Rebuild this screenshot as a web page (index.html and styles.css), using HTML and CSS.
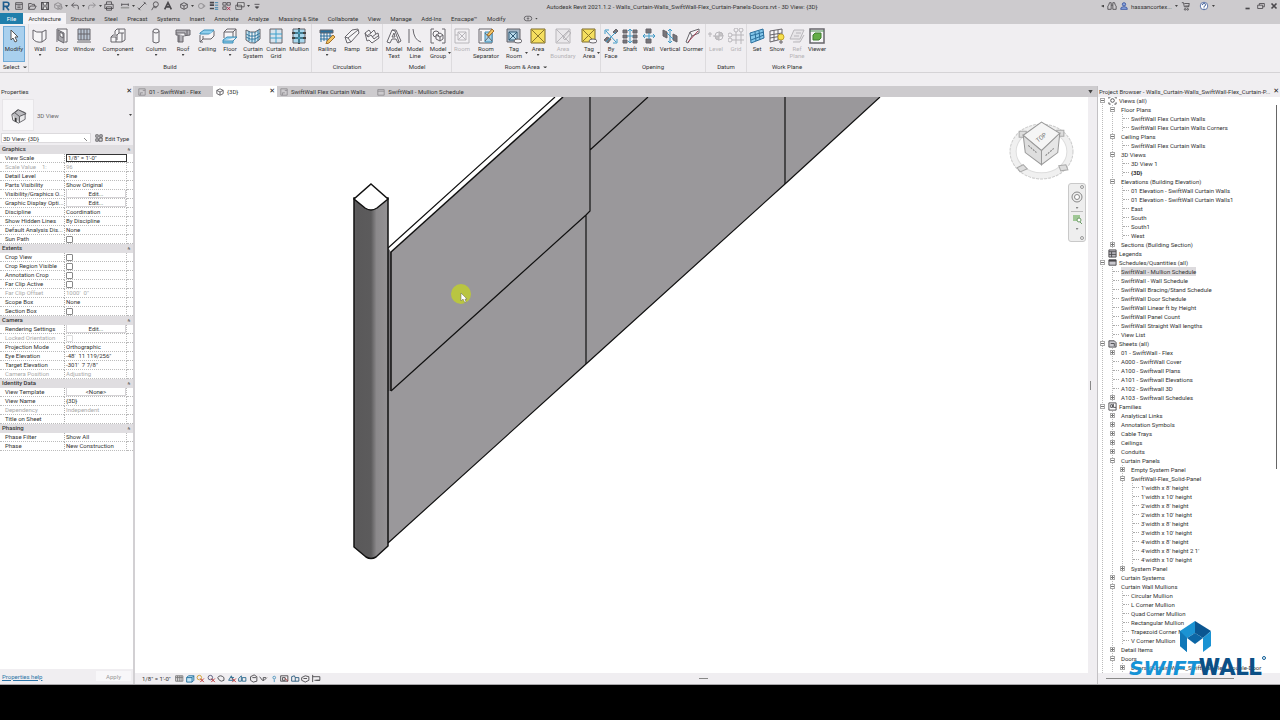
FILE: index.html
```
<!DOCTYPE html>
<html lang="en">

<head>
    <meta charset="UTF-8">
    <meta name="viewport" content="width=device-width, initial-scale=1.0">
    <title>Autodesk Revit 2021.1.2</title>
    <link rel="stylesheet" href="styles.css">
</head>

<body>
    <header class="titlebar">
        <div class="qat">
            <svg viewBox="0 0 12 12"><path d="M3 11V1.5h4a2.4 2.4 0 0 1 0 5H3M6 6.500l3.500 4.500" fill="none" stroke="#1f5c8d" stroke-width="2"/></svg>
            <svg viewBox="0 0 12 12" class="ic"><path d="M2 2h8v8H2zM2 4h8M4 6h4M4 8h4"/></svg>
            <svg viewBox="0 0 12 12" class="ic"><path d="M2 10V3h3l1 1h3v2M2 10l2-4h7l-2 4z"/></svg>
            <svg viewBox="0 0 12 12" class="ic"><path d="M2 2h8v8H2z" stroke-width="1.500"/><path d="M4 2v3h4V2M4 10V7h4v3" fill="#eee"/></svg>
            <svg viewBox="0 0 12 12" class="ic dim"><path d="M2 4l4-2 4 2v4l-4 2-4-2zM2 4l4 2 4-2M6 6v4"/><circle cx="9" cy="8" r="2"/></svg>
            <i class="caret"></i>
            <svg viewBox="0 0 12 12" class="ic"><path d="M5 2L2 5l3 3M2 5h6q2 0 2 2v3"/></svg>
            <i class="caret"></i>
            <svg viewBox="0 0 12 12" class="ic dim"><path d="M7 2l3 3-3 3M10 5H4Q2 5 2 7v3"/></svg>
            <i class="caret"></i>
            <svg viewBox="0 0 12 12" class="ic"><path d="M3 4V1h6v3M1 4h10v5H1zM3 7h6v4H3z"/></svg>
            <i class="sep"></i>
            <svg viewBox="0 0 12 12" class="ic"><path d="M2 3v3M10 3v3M2 4h8" /><path d="M1 8h10" stroke-width="2" stroke="#999"/></svg>
            <i class="caret"></i>
            <svg viewBox="0 0 12 12" class="ic"><path d="M2 10l8-8M1 8l3 3M8 1l3 3"/></svg>
            <svg viewBox="0 0 12 12" class="ic"><circle cx="7" cy="4" r="3"/><path d="M5 6l-3 5M5 8h3"/></svg>
            <svg viewBox="0 0 12 12" class="ic"><path d="M2 10L6 2l4 8M4 7h4" stroke-width="2"/></svg>
            <i class="sep"></i>
            <svg viewBox="0 0 12 12" class="ic"><path d="M2 4l4-2 4 2v4l-4 2-4-2zM2 4l4 2 4-2M6 6v4"/></svg>
            <i class="caret"></i>
            <svg viewBox="0 0 12 12" class="ic dim"><circle cx="6" cy="6" r="3"/><path d="M9 4l2 2-2 2"/></svg>
            <svg viewBox="0 0 12 12" class="ic"><path d="M1 2h5M1 5h5M1 9h5" stroke-width="2"/><path d="M7 2h4M7 5h4M7 8h4M7 10h4" stroke="#2a7ca8"/></svg>
            <svg viewBox="0 0 12 12" class="ic"><path d="M1 2h4v3H1zM6 2h4v3H6zM1 7h4v3H1z"/><path d="M6 7l4 4M10 7l-4 4" stroke="#b02043"/></svg>
            <svg viewBox="0 0 12 12" class="ic"><path d="M3 2h8v5H3zM1 5h7v5H1z" fill="#ddd"/></svg>
            <i class="caret"></i>
            <svg viewBox="0 0 12 12" class="ic"><path d="M3 4h6M4 7h4l-2 2z" fill="#444"/></svg>
        </div>
        <div class="title">Autodesk Revit 2021.1.2 - Walls_Curtain-Walls_SwiftWall-Flex_Curtain-Panels-Doors.rvt - 3D View: {3D}</div>
        <div class="account">
            <i class="caret left"></i>
            <svg viewBox="0 0 12 12" class="ic"><path d="M2 5l1-3h2v8H1V6zM10 5L9 2H7v8h4V6zM5 5h2"/></svg>
            <svg viewBox="0 0 12 12" class="ic"><circle cx="6" cy="4" r="2" fill="#8aa4dd" stroke="#334f9c"/><path d="M2 10q0-3 3-3h2q3 0 3 3z" fill="#8aa4dd" stroke="#334f9c"/></svg>
            <span>hassancortex...</span>
            <i class="caret"></i>
            <svg viewBox="0 0 12 12" class="ic"><path d="M1 2h2l1 5h5l1-4H4M5 6h5"/><circle cx="5" cy="10" r="1"/><circle cx="8" cy="10" r="1"/></svg>
            <svg viewBox="0 0 12 12" class="ic help"><circle cx="6" cy="6" r="4.500" fill="#fff" stroke="#44619e"/><path d="M4 5q0-2 2-2t2 1.500Q8 6 6 6.500V8M6 9v1" stroke="#284888"/></svg>
            <i class="caret"></i>
        </div>
        <div class="window-buttons">
            <button aria-label="Minimize"><svg viewBox="0 0 12 12" class="ic"><path d="M3 9h5" stroke-width="2"/></svg></button>
            <button aria-label="Restore"><svg viewBox="0 0 12 12" class="ic"><path d="M4 5V3h6v4H8M2 5h6v4H2z"/></svg></button>
            <button aria-label="Close"><svg viewBox="0 0 12 12" class="ic"><path d="M3 3l6 6M9 3l-6 6" stroke-width="2"/></svg></button>
        </div>
    </header>

    <nav class="ribbon-tabs">
        <button class="file">File</button>
        <button class="active">Architecture</button>
        <button>Structure</button>
        <button>Steel</button>
        <button>Precast</button>
        <button>Systems</button>
        <button>Insert</button>
        <button>Annotate</button>
        <button>Analyze</button>
        <button>Massing &amp; Site</button>
        <button>Collaborate</button>
        <button>View</button>
        <button>Manage</button>
        <button>Add-Ins</button>
        <button>Enscape™</button>
        <button>Modify</button>
        <button class="more" aria-label="Display options"><svg viewBox="0 0 12 12" class="ic"><rect x="1" y="3" width="10" height="6" rx="3"/><circle cx="6" cy="6" r="1"/></svg><i class="caret"></i></button>
    </nav>

    <section class="ribbon">
        <div class="group select-group">
            <div class="tools">
                <button class="tool w22 active"><svg viewBox="0 0 16 16"><path d="M5 2v10l2-2 2 4 2-1-2-4h3z" fill="#fff" stroke="#555"/></svg>Modify</button>
            </div>
            <div class="group-name">Select <i class="caret"></i></div>
        </div>
        <div class="group">
            <div class="tools">
                <button class="tool w22"><svg viewBox="0 0 16 16" class="ri"><path d="M1 2q3 3 9 2l4-2v9l-4 3q-6 1-9-3zM10 4v10"/></svg>Wall<i class="caret"></i></button>
                <button class="tool w22"><svg viewBox="0 0 16 16" class="ri"><path d="M3 14V1h10v13h-2"/><path d="M4 2l6 3v10l-6-3z" fill="#aaa9ae"/><path d="M6 4l3 2v4L6 8z" fill="#fff"/></svg>Door</button>
                <button class="tool w22"><svg viewBox="0 0 16 16" class="ri"><path d="M2 1h12v11H2z" fill="#b9c4d2"/><path d="M8 1v11M2 6h12M1 14h14M5 1v11M11 1v11"/></svg>Window</button>
                <button class="tool w46"><svg viewBox="0 0 16 16" class="ri"><path d="M5 6V3l2-2h8v11l-3 2H1V9l2-2h4v5M7 7l2-2h5M9 5V1M12 14V5M1 9h5v5"/></svg>Component<i class="caret"></i></button>
                <button class="tool w30"><svg viewBox="0 0 16 16" class="ri"><path d="M5 3v11l3 1 3-1V3z"/><ellipse cx="8" cy="3" rx="3" ry="2"/></svg>Column<i class="caret"></i></button>
                <button class="tool w24"><svg viewBox="0 0 16 16" class="ri"><path d="M1 2h14v5l-7 1v6H3V7H1z" fill="#b3b1b7"/><path d="M1 5h9v3M4 14V7M12 2v5"/></svg>Roof<i class="caret"></i></button>
                <button class="tool w24"><svg viewBox="0 0 16 16" class="ri"><path d="M1 5l4-3h10l-3 4H1z" fill="#8fd0ee" stroke="#3c8eb8"/><path d="M1 7v7l3-3V8M4 11h8l3-3V3M1 14h3"/></svg>Ceiling</button>
                <button class="tool w22"><svg viewBox="0 0 16 16" class="ri"><path d="M2 10V4l3-3h9v9M2 4h9l3-3M11 4v6"/><path d="M1 12l4-3h10l-4 4v2H1zM1 13h10l4-4" fill="#8fd0ee" stroke="#3c8eb8"/></svg>Floor<i class="caret"></i></button>
                <button class="tool w24"><svg viewBox="0 0 16 16" class="ri"><path d="M1 2q4 3 9 2l5-3v10l-5 4q-5 1-9-3z" fill="#bfe2f2"/><path d="M4 3v10M7 4v10M10 4v11M13 2v11M1 6q4 3 9 2l5-3M1 9q4 3 9 2l5-3" stroke="#34789f"/></svg>Curtain<br>System</button>
                <button class="tool w22"><svg viewBox="0 0 16 16" class="ri"><path d="M2 1h12v14H2z" fill="#d7e3ec"/><path d="M8 1v14M2 6h12M2 10h12" stroke="#3da0cc"/></svg>Curtain<br>Grid</button>
                <button class="tool w24"><svg viewBox="0 0 16 16" class="ri"><path d="M2 1h12v14H2z" fill="#a9d6ec"/><path d="M8 0v16M1 5h14M1 10h14" stroke="#444" stroke-width="2"/><path d="M8 1v14M4 5h8M4 10h8" stroke="#42b4dc"/></svg>Mullion</button>
            </div>
            <div class="group-name">Build</div>
        </div>
        <div class="group">
            <div class="tools">
                <button class="tool w30"><svg viewBox="0 0 16 16" class="ri"><path d="M1 2h13v3H1z" fill="#2b6f9c"/><path d="M2 5v9M5 5v8M8 5v8M11 5v6M1 8h12M1 11h10" stroke="#2b6f9c"/><path d="M8 13l6-6 2 2-6 6-3 1z" fill="#f2c466" stroke="#a4712b"/></svg>Railing<i class="caret"></i></button>
                <button class="tool w20"><svg viewBox="0 0 16 16" class="ri"><path d="M1 9l7-7 6-1 1 4-8 9-4 1zM1 9l3 1 3 4M4 10l10-8"/></svg>Ramp</button>
                <button class="tool w20"><svg viewBox="0 0 16 16" class="ri"><path d="M1 5l4-3 2 3 3-3 2 4 2-1 1 5-7 5-3-3-2 1zM1 5l3 4 3-2 3 4 4-3M7 5L3 8M12 6l-4 3"/></svg>Stair</button>
            </div>
            <div class="group-name">Circulation</div>
        </div>
        <div class="group">
            <div class="tools">
                <button class="tool w22"><svg viewBox="0 0 16 16" class="ri"><path d="M1 14L6 2h4l5 11-3 2-2-4H6l-2 4zM8 5l-2 4h3zM6 2l3 1 4 11"/></svg>Model<br>Text</button>
                <button class="tool w20"><svg viewBox="0 0 16 16" class="ri"><path d="M2 1v14M6 1q1 11 8 13"/></svg>Model<br>Line</button>
                <button class="tool w26"><svg viewBox="0 0 16 16" class="ri"><path d="M4 1H1v14h3M12 1h3v14h-3"/><circle cx="6" cy="6" r="3"/><path d="M6 7l4-2 3 2v4l-3 2-4-2zM6 7l4 2 3-2M10 9v4"/></svg>Model<br>Group<i class="caret side"></i></button>
            </div>
            <div class="group-name">Model</div>
        </div>
        <div class="group">
            <div class="tools">
                <button class="tool w20" disabled><svg viewBox="0 0 16 16" class="ri"><path d="M1 1h14v14H1zM4 4h8v8H4zM4 4l8 8M12 4l-8 8M1 7h3"/></svg>Room</button>
                <button class="tool w28"><svg viewBox="0 0 16 16" class="ri"><path d="M1 1h13v14H1z"/><path d="M7 4h7v10H7z" fill="#a9d6ec" stroke="#3c8eb8"/><path d="M3 3v10M7 5l7 8M14 5l-7 8"/><path d="M9 7l5-6 2 2-5 5z" fill="#f2c466" stroke="#a4712b"/></svg>Room<br>Separator</button>
                <button class="tool w28"><svg viewBox="0 0 16 16" class="ri"><path d="M1 1h13v13H1z" fill="#a8b8c7"/><path d="M3 4h8v8H3zM3 4l8 8M11 4l-8 8" fill="#bcdcec" stroke="#315a76"/><ellipse cx="12" cy="13" rx="4" ry="2"/></svg>Tag<br>Room<i class="caret side"></i></button>
                <button class="tool w20"><svg viewBox="0 0 16 16" class="ri"><path d="M1 1h14v14H1z" fill="#f5df5f" stroke="#7d6b2c"/><path d="M2 2l12 12M14 2L2 14" stroke="#8a762b"/></svg>Area<i class="caret"></i></button>
                <button class="tool w30" disabled><svg viewBox="0 0 16 16" class="ri"><path d="M1 1h14v14H1zM1 1l13 13M14 2L2 14M8 10l6-7 2 2-6 7z" fill="#e1dfe2"/></svg>Area<br>Boundary</button>
                <button class="tool w22"><svg viewBox="0 0 16 16" class="ri"><path d="M1 1h13v13H1z" fill="#f5df5f" stroke="#7d6b2c"/><path d="M2 2l11 11M13 2L2 13" stroke="#8a762b"/><ellipse cx="12" cy="13" rx="4" ry="2"/></svg>Tag<br>Area<i class="caret side"></i></button>
            </div>
            <div class="group-name">Room &amp; Area <i class="caret"></i></div>
        </div>
        <div class="group">
            <div class="tools">
                <button class="tool w20"><svg viewBox="0 0 16 16" class="ri"><path d="M10 4l3-3 2 2-3 3zM1 12l3-3 4 2-3 4z" fill="#77757a"/><path d="M3 3l10 11M3 14L13 4M2 6V2h4M10 15h4v-4" fill="none" stroke="#409bc8"/></svg>By<br>Face</button>
                <button class="tool w18"><svg viewBox="0 0 16 16" class="ri"><path d="M1 2h4v3H1zM11 2h4v3h-4zM1 7h4v3H1zM11 7h4v3h-4zM1 12h4v3H1zM11 12h4v3h-4z" fill="#77757a"/><path d="M8 1v14M5 8h6M6 3l2-2 2 2M6 13l2 2 2-2" fill="none" stroke="#409bc8"/></svg>Shaft</button>
                <button class="tool w20"><svg viewBox="0 0 16 16" class="ri"><path d="M5 1h5v4H5zM5 11h5v4H5z" fill="#77757a"/><path d="M2 8h12M4 6L2 8l2 2M12 6l2 2-2 2M8 5v6" fill="none" stroke="#409bc8"/></svg>Wall</button>
                <button class="tool w22"><svg viewBox="0 0 16 16" class="ri"><path d="M1 2l4 2v6L1 8zM11 6l4 2v6l-4-2z" fill="#77757a"/><path d="M8 1v14M5 5l6 6M6 3l2-2 2 2M6 13l2 2 2-2" fill="none" stroke="#409bc8"/></svg>Vertical</button>
                <button class="tool w24"><svg viewBox="0 0 16 16" class="ri"><path d="M1 14L5 4l9-3v4L7 8l-4 7zM5 4l2 4"/><path d="M3 14L13 3" stroke="#a33d52"/></svg>Dormer</button>
            </div>
            <div class="group-name">Opening</div>
        </div>
        <div class="group">
            <div class="tools">
                <button class="tool w20" disabled><svg viewBox="0 0 16 16" class="ri"><path d="M0 6h4M2 4v5M5 8h10M11 4v8"/><circle cx="11" cy="8" r="4"/><path d="M11 4v4h4q0-4-4-4zM11 8v4q-4 0-4-4z" fill="#888"/></svg>Level</button>
                <button class="tool w20" disabled><svg viewBox="0 0 16 16" class="ri"><circle cx="8" cy="2" r="2"/><circle cx="13" cy="2" r="2"/><circle cx="2" cy="7" r="2"/><circle cx="2" cy="12" r="2"/><path d="M8 4v12M13 4v12M4 7h12M4 12h12"/></svg>Grid</button>
            </div>
            <div class="group-name">Datum</div>
        </div>
        <div class="group last">
            <div class="tools">
                <button class="tool w20"><svg viewBox="0 0 16 16" class="ri"><path d="M1 5l13-4 1 9-13 5z" fill="#84c7ea" stroke="#2b6f9c"/><path d="M6 4l1 9M10 3l1 9M1 8l14-4M2 12l13-5" stroke="#2b6f9c"/></svg>Set</button>
                <button class="tool w20"><svg viewBox="0 0 16 16" class="ri"><path d="M1 3l12-2v10L1 14zM5 2v11M9 2v10M1 7l12-2M1 10l12-2"/><circle cx="12" cy="9" r="3" fill="#f7e04e" stroke="#c4a52a"/><path d="M11 13h2v2h-2z"/></svg>Show</button>
                <button class="tool w20" disabled><svg viewBox="0 0 16 16" class="ri"><path d="M5 2h10l-4 9H1zM7 5h5M5 8h5M4 14h7l4-7" fill="#dad8db"/></svg>Ref<br>Plane</button>
                <button class="tool w20"><svg viewBox="0 0 16 16" class="ri"><path d="M1 1h14v14H1z" stroke-width="1.500"/><path d="M1 3h14" stroke="#4c8f52"/><path d="M4 7l2-2h6v5l-2 2H4z" fill="#63ad46" stroke="#3f7e2e"/></svg>Viewer</button>
            </div>
            <div class="group-name">Work Plane</div>
        </div>
    </section>
    <div class="options-bar"></div>

    <main class="workspace">
        <aside class="properties">
            <div class="panel-title"><span>Properties</span><button class="close" aria-label="Close properties">✕</button></div>
            <div class="type-box">
                <div class="type-icon"><svg viewBox="0 0 20 20"><path d="M3 9l6-5 8 3v7l-7 4-6-3z" fill="#e9e9eb" stroke="#66666a"/><path d="M3 9l3-2 5 4v6M11 11l7-3-8-4-4 3" fill="#bcbcc0" stroke="#55555a"/><path d="M6 12l2 1v4l-2-1z" fill="#333"/></svg></div>
                <span>3D View</span>
                <i class="caret"></i>
            </div>
            <div class="type-row">
                <select aria-label="Type"><option>3D View: {3D}</option></select>
                <button class="edit-type"><svg viewBox="0 0 10 10" class="ic"><path d="M1 1h3v3H1zM6 1h3v3H6zM1 6h3v3H1zM5 5h4v4H5z" fill="#ddd"/></svg>Edit Type</button>
            </div>
            <div class="grid-wrap">
                <table class="props">
                    <colgroup><col class="col-name"><col><col class="col-end"></colgroup>
                    <tr class="section"><th colspan="3">Graphics<i>»</i></th></tr>
                    <tr><td><label for="scale">View Scale</label></td><td><input type="text" id="scale" value="1/8&quot; = 1'-0&quot;"></td><td></td></tr>
                    <tr class="off"><td>Scale Value &nbsp;&nbsp; 1:</td><td>96</td><td></td></tr>
                    <tr><td>Detail Level</td><td>Fine</td><td></td></tr>
                    <tr><td>Parts Visibility</td><td>Show Original</td><td></td></tr>
                    <tr><td>Visibility/Graphics O...</td><td><button>Edit...</button></td><td></td></tr>
                    <tr><td>Graphic Display Opti...</td><td><button>Edit...</button></td><td></td></tr>
                    <tr><td>Discipline</td><td>Coordination</td><td></td></tr>
                    <tr><td>Show Hidden Lines</td><td>By Discipline</td><td></td></tr>
                    <tr><td>Default Analysis Dis...</td><td>None</td><td></td></tr>
                    <tr><td><label for="sun">Sun Path</label></td><td><input type="checkbox" id="sun"></td><td></td></tr>
                    <tr class="section"><th colspan="3">Extents<i>»</i></th></tr>
                    <tr><td><label for="crop">Crop View</label></td><td><input type="checkbox" id="crop"></td><td></td></tr>
                    <tr><td><label for="region">Crop Region Visible</label></td><td><input type="checkbox" id="region"></td><td></td></tr>
                    <tr><td><label for="anno">Annotation Crop</label></td><td><input type="checkbox" id="anno"></td><td></td></tr>
                    <tr><td><label for="farclip">Far Clip Active</label></td><td><input type="checkbox" id="farclip"></td><td></td></tr>
                    <tr class="off"><td>Far Clip Offset</td><td>1000'&nbsp; 0"</td><td></td></tr>
                    <tr><td>Scope Box</td><td>None</td><td></td></tr>
                    <tr><td><label for="sectionbox">Section Box</label></td><td><input type="checkbox" id="sectionbox"></td><td></td></tr>
                    <tr class="section"><th colspan="3">Camera<i>»</i></th></tr>
                    <tr><td>Rendering Settings</td><td><button>Edit...</button></td><td></td></tr>
                    <tr class="off"><td><label for="locked">Locked Orientation</label></td><td><input type="checkbox" id="locked" disabled></td><td></td></tr>
                    <tr><td>Projection Mode</td><td>Orthographic</td><td></td></tr>
                    <tr><td>Eye Elevation</td><td>-48'&nbsp; 11 119/256"</td><td></td></tr>
                    <tr><td>Target Elevation</td><td>-301'&nbsp; 7 7/8"</td><td></td></tr>
                    <tr class="off"><td>Camera Position</td><td>Adjusting</td><td></td></tr>
                    <tr class="section"><th colspan="3">Identity Data<i>»</i></th></tr>
                    <tr><td>View Template</td><td><button>&lt;None&gt;</button></td><td></td></tr>
                    <tr><td>View Name</td><td>{3D}</td><td></td></tr>
                    <tr class="off"><td>Dependency</td><td>Independent</td><td></td></tr>
                    <tr><td>Title on Sheet</td><td></td><td></td></tr>
                    <tr class="section"><th colspan="3">Phasing<i>»</i></th></tr>
                    <tr><td>Phase Filter</td><td>Show All</td><td></td></tr>
                    <tr><td>Phase</td><td>New Construction</td><td></td></tr>
                </table>
            </div>
            <div class="props-footer"><a href="#">Properties help</a><button disabled>Apply</button></div>
        </aside>

        <section class="document">
            <nav class="doc-tabs">
                <a href="#" class="doc first"><svg viewBox="0 0 10 10" class="ic dim"><path d="M1 1h8v8H1zM3 9V6h3M6 3h3"/></svg>01 - SwiftWall - Flex</a>
                <a href="#" class="doc current"><svg viewBox="0 0 10 10" class="ic"><path d="M1 3l4-2 4 2v4L5 9 1 7zM1 3l4 2 4-2M5 5v4"/></svg>{3D}<span class="close">✕</span></a>
                <a href="#" class="doc"><svg viewBox="0 0 10 10" class="ic dim"><path d="M1 1h8v8H1zM3 9V6h3M6 3h3"/></svg>SwiftWall Flex Curtain Walls</a>
                <a href="#" class="doc"><svg viewBox="0 0 10 10" class="ic dim"><path d="M1 2h8v7H1zM1 4h8"/></svg>SwiftWall - Mullion Schedule</a>
                <button class="tab-list" aria-label="Open views"><i class="caret"></i></button>
            </nav>
            <div class="view-row">
                <div class="viewport">
                    <svg class="model" viewBox="135 97 953 576" preserveAspectRatio="xMinYMin slice">
                        <defs>
                            <linearGradient id="post">
                                <stop offset="0" stop-color="#616061"/>
                                <stop offset=".1" stop-color="#5a595a"/>
                                <stop offset=".5" stop-color="#5c5b5c"/>
                                <stop offset=".66" stop-color="#8b898b"/>
                                <stop offset="1" stop-color="#949294"/>
                            </linearGradient>
                        </defs>
                        <!-- wall panels -->
                        <path d="M388 248L555 97h325L785 184 586 364 388 543z" fill="#9a989b"/>
                        <path d="M388 248L555 97h8L391 252z" fill="#fff"/>
                        <path d="M388 248l3 4v139h-3z" fill="#777578"/>
                        <g fill="none" stroke="#111" stroke-width="1.200">
                            <path d="M388 248L555 97M880 97L785 184 586 364 388 543"/>
                            <path d="M391 252L563 97" stroke-width="1.500"/>
                            <path d="M391 252v139" stroke-width="1.500"/>
                            <path d="M391 391L586 215l4-4V97M586 215v149M590 150l58-53M785 97v87"/>
                        </g>
                        <!-- corner post -->
                        <path d="M354 198v349l12 10q5 3 10 0l12-11V198z" fill="url(#post)" stroke="#111" stroke-width="1.500"/>
                        <path d="M371 184l17 15-11 9q-6 4-12 0l-11-9z" fill="#fff" stroke="#111" stroke-width="1.500"/>
                        <circle cx="461" cy="294" r="10" fill="#b9c541"/>
                        <path d="M461 293v8l2-2 2 4 1-1-1-3h2z" fill="#fff" stroke="#665" stroke-width=".5"/>
                    </svg>
                    <svg class="view-cube" viewBox="0 0 64 64">
                        <ellipse cx="32" cy="34" rx="28" ry="24" fill="none" stroke="#f0f0f0" stroke-width="6"/>
                        <ellipse cx="32" cy="34" rx="31" ry="27" fill="none" stroke="#ccc" stroke-dasharray="3 1"/>
                        <ellipse cx="32" cy="34" rx="25" ry="21" fill="#fff" stroke="#ddd"/>
                        <g fill="#ddd" stroke="#aaa"><path d="M10 14h7v6h-7zM47 13h7v6h-7zM8 50l6-3 4 4-7 3zM49 48l7-1 2 5-7 1z"/></g>
                        <path d="M14 18L32 5l18 11-18 17z" fill="#f5f5f5" stroke="#999"/>
                        <path d="M14 18l18 15v14L16 35z" fill="#dedede" stroke="#999"/>
                        <path d="M50 16L32 33v14l16-12z" fill="#e6e6e6" stroke="#999"/>
                        <text x="26" y="22" transform="rotate(-38 32 20)">TOP</text>
                        <path d="M19 28l8 7M36 38l8-7" stroke="#888" stroke-dasharray="2 1"/>
                    </svg>
                    <div class="nav-bar">
                        <button aria-label="Close navigation bar"><svg viewBox="0 0 16 6"><circle cx="13" cy="3" r="1.500" fill="none" stroke="#999"/></svg></button>
                        <button aria-label="Steering wheel"><svg viewBox="0 0 16 14"><circle cx="8" cy="7" r="5" fill="none" stroke="#888"/><circle cx="8" cy="7" r="2.500" fill="#fff" stroke="#888"/></svg></button>
                        <i class="caret"></i>
                        <hr>
                        <button aria-label="Zoom"><svg viewBox="0 0 16 12"><path d="M4 2h7v6H4z" fill="#9fc795"/><circle cx="10" cy="7" r="2" fill="#fff" stroke="#6b9b65"/><path d="M11 9l2 2" stroke="#6b9b65"/></svg></button>
                        <i class="caret"></i>
                        <button class="end" aria-label="Navigation options"><svg viewBox="0 0 16 6"><circle cx="13" cy="3" r="1.500" fill="none" stroke="#999"/></svg></button>
                    </div>
                </div>
                <div class="splitter"></div>
            </div>
            <footer class="view-controls">
                <span>1/8" = 1'-0"</span>
                <div class="view-icons">
                    <svg viewBox="0 0 10 10" class="ic"><path d="M1 2h8v6H1zM1 4h8M3 2v6M5 2v6M7 2v6" stroke="#777"/></svg>
                    <svg viewBox="0 0 10 10" class="ic"><path d="M1 4l2-2h6v5L7 9H1zM1 4h6v5M7 4l2-2" fill="#c6e6f6" stroke="#1e6d9c"/></svg>
                    <svg viewBox="0 0 10 10" class="ic"><circle cx="4" cy="4" r="2.500" stroke="#d09b2b"/><path d="M5 5l4 4M9 5L5 9" stroke="#b92a2a"/></svg>
                    <svg viewBox="0 0 10 10" class="ic"><circle cx="4" cy="4" r="2.500" stroke="#557"/><path d="M5 5l4 4M9 5L5 9" stroke="#b92a2a"/></svg>
                    <svg viewBox="0 0 10 10" class="ic"><path d="M1 4q3-4 7 0v3q-3 2-5 0z"/></svg>
                    <svg viewBox="0 0 10 10" class="ic"><path d="M1 7l3-5 2 5zM3 4h4" stroke="#28688c"/><path d="M5 5l4 4M9 5L5 9" stroke="#b92a2a"/></svg>
                    <svg viewBox="0 0 10 10" class="ic"><path d="M1 8V5l3-3v6zM5 8V4h4v4z" stroke="#28688c"/></svg>
                    <svg viewBox="0 0 10 10" class="ic"><path d="M2 3l4-2 3 2v5l-4 1-3-2zM4 4h4"/></svg>
                    <svg viewBox="0 0 10 10" class="ic"><path d="M1 3l3 4h2l3-3M5 7V4h3"/></svg>
                    <svg viewBox="0 0 10 10" class="ic"><circle cx="5" cy="4" r="1.500" stroke="#4a92bb"/><path d="M5 6v3" stroke="#4a92bb"/></svg>
                    <svg viewBox="0 0 10 10" class="ic"><path d="M1 2h8v6H1zM3 4h3v3H3z"/><path d="M6 5l3 3" stroke="#b92a2a"/></svg>
                    <svg viewBox="0 0 10 10" class="ic"><path d="M1 8V3l3-1 1 2h4v4zM5 4v4" stroke="#28597c"/></svg>
                    <svg viewBox="0 0 10 10" class="ic"><path d="M1 4l4-2 4 1v4L5 9 1 7zM3 5h4"/></svg>
                    <svg viewBox="0 0 10 10" class="ic"><path d="M1 1v8M1 3h8v4H5M3 7h6"/></svg>
                </div>
                <i class="grip"></i>
            </footer>
        </section>

        <aside class="browser">
            <div class="panel-title"><span>Project Browser - Walls_Curtain-Walls_SwiftWall-Flex_Curtain-P...</span><button class="close" aria-label="Close project browser">✕</button></div>
            <div class="tree-wrap">
                <ul class="tree">
                    <li><div><button class="twig open" aria-label="Collapse"></button><svg viewBox="0 0 10 10" class="ic"><path d="M1 3V1h2M7 1h2v2M9 7v2H7M3 9H1V7"/><circle cx="5" cy="5" r="2"/></svg>Views (all)</div>
                        <ul>
                            <li><div><button class="twig open" aria-label="Collapse"></button>Floor Plans</div>
                                <ul>
                                    <li>SwiftWall Flex Curtain Walls</li>
                                    <li>SwiftWall Flex Curtain Walls Corners</li>
                                </ul>
                            </li>
                            <li><div><button class="twig open" aria-label="Collapse"></button>Ceiling Plans</div>
                                <ul>
                                    <li>SwiftWall Flex Curtain Walls</li>
                                </ul>
                            </li>
                            <li><div><button class="twig open" aria-label="Collapse"></button>3D Views</div>
                                <ul>
                                    <li>3D View 1</li>
                                    <li><b>{3D}</b></li>
                                </ul>
                            </li>
                            <li><div><button class="twig open" aria-label="Collapse"></button>Elevations (Building Elevation)</div>
                                <ul>
                                    <li>01 Elevation - SwiftWall Curtain Walls</li>
                                    <li>01 Elevation - SwiftWall Curtain Walls1</li>
                                    <li>East</li>
                                    <li>South</li>
                                    <li>South1</li>
                                    <li>West</li>
                                </ul>
                            </li>
                            <li><div><button class="twig" aria-label="Expand"></button>Sections (Building Section)</div></li>
                        </ul>
                    </li>
                    <li><div class="no-twig"><svg viewBox="0 0 10 10" class="ic"><path d="M1 1h8v8H1zM1 3h8M4 3v6M1 6h8" fill="#bbb9c0"/></svg>Legends</div></li>
                    <li><div><button class="twig open" aria-label="Collapse"></button><svg viewBox="0 0 10 10" class="ic"><path d="M1 2h8v6H1z" fill="#c9c8ce"/><path d="M1 3h8" stroke-width="2"/></svg>Schedules/Quantities (all)</div>
                        <ul>
                            <li><span class="selected">SwiftWall - Mullion Schedule</span></li>
                            <li>SwiftWall - Wall Schedule</li>
                            <li>SwiftWall Bracing/Stand Schedule</li>
                            <li>SwiftWall Door Schedule</li>
                            <li>SwiftWall Linear ft by Height</li>
                            <li>SwiftWall Panel Count</li>
                            <li>SwiftWall Straight Wall lengths</li>
                            <li>View List</li>
                        </ul>
                    </li>
                    <li><div><button class="twig open" aria-label="Collapse"></button><svg viewBox="0 0 10 10" class="ic"><path d="M1 2h6l2 2v5H1zM3 5h4v3" fill="#c9c8ce"/></svg>Sheets (all)</div>
                        <ul>
                            <li><div><button class="twig" aria-label="Expand"></button>01 - SwiftWall - Flex</div></li>
                            <li>A000 - SwiftWall Cover</li>
                            <li>A100 - Swiftwall Plans</li>
                            <li>A101 - Swiftwall Elevations</li>
                            <li>A102 - Swiftwall 3D</li>
                            <li><div><button class="twig" aria-label="Expand"></button>A103 - Swiftwall Schedules</div></li>
                        </ul>
                    </li>
                    <li><div><button class="twig open" aria-label="Collapse"></button><svg viewBox="0 0 10 10" class="ic"><path d="M1 1h8v8H1zM3 3h2v3H3zM6 2v4h3"/></svg>Families</div>
                        <ul>
                            <li><div><button class="twig" aria-label="Expand"></button>Analytical Links</div></li>
                            <li><div><button class="twig" aria-label="Expand"></button>Annotation Symbols</div></li>
                            <li><div><button class="twig" aria-label="Expand"></button>Cable Trays</div></li>
                            <li><div><button class="twig" aria-label="Expand"></button>Ceilings</div></li>
                            <li><div><button class="twig" aria-label="Expand"></button>Conduits</div></li>
                            <li><div><button class="twig open" aria-label="Collapse"></button>Curtain Panels</div>
                                <ul>
                                    <li><div><button class="twig" aria-label="Expand"></button>Empty System Panel</div></li>
                                    <li><div><button class="twig open" aria-label="Collapse"></button>SwiftWall-Flex_Solid-Panel</div>
                                        <ul>
                                            <li>1'width x 8' height</li>
                                            <li>1'width x 10' height</li>
                                            <li>2'width x 8' height</li>
                                            <li>2'width x 10' height</li>
                                            <li>3'width x 8' height</li>
                                            <li>3'width x 10' height</li>
                                            <li>4'width x 8' height</li>
                                            <li>4'width x 8' height 2 1'</li>
                                            <li>4'width x 10' height</li>
                                        </ul>
                                    </li>
                                    <li><div><button class="twig" aria-label="Expand"></button>System Panel</div></li>
                                </ul>
                            </li>
                            <li><div><button class="twig" aria-label="Expand"></button>Curtain Systems</div></li>
                            <li><div><button class="twig open" aria-label="Collapse"></button>Curtain Wall Mullions</div>
                                <ul>
                                    <li>Circular Mullion</li>
                                    <li>L Corner Mullion</li>
                                    <li>Quad Corner Mullion</li>
                                    <li>Rectangular Mullion</li>
                                    <li>Trapezoid Corner Mullion</li>
                                    <li>V Corner Mullion</li>
                                </ul>
                            </li>
                            <li><div><button class="twig" aria-label="Expand"></button>Detail Items</div></li>
                            <li><div><button class="twig open" aria-label="Collapse"></button>Doors</div>
                                <ul>
                                    <li><div><button class="twig" aria-label="Expand"></button>Doors_Curtain-Walls_SwiftWall-Flex_Double-Door</div></li>
                                </ul>
                            </li>
                        </ul>
                    </li>
                </ul>
                <i class="v-thumb"></i>
            </div>
            <div class="h-scroll"><i></i></div>
            <svg class="logo" viewBox="0 0 138 58">
                <path d="M51 11L66 1v12l-8 5v14l-7-6z" fill="#1b93d3"/>
                <path d="M66 1l16 10-8 7-8-5z" fill="#0b5691"/>
                <path d="M82 11v15l-8 6V18z" fill="#1b93d3"/>
                <path d="M58 18l8-5 8 5-8 6z" fill="#0c66a5"/>
                <path d="M51 11l7 7v14l-7-6z" fill="#1178b8"/>
                <text x="0" y="55" class="swift">SWIFT</text>
                <text x="70" y="55" class="wall">WALL</text>
                <circle cx="135" cy="38" r="1.500" fill="none" stroke="#0b5c97"/>
            </svg>
        </aside>
    </main>
    <div class="letterbox"></div>
</body>

</html>
```
FILE: styles.css
```
* {
    box-sizing: border-box;
}

body {
    margin: 0;
    height: 100vh;
    display: flex;
    flex-direction: column;
    overflow: hidden;
    background: #f0eef1;
    color: #333;
    font-family: Roboto, "Open Sans", sans-serif;
    font-size: 6px;
    line-height: 9px;
}

button,
input,
select {
    font: inherit;
    color: inherit;
    margin: 0;
    padding: 0;
    border: 0;
    border-radius: 0;
    background: none;
}

svg {
    display: block;
    flex: none;
}

.ic {
    fill: none;
    stroke: #4a484c;
    stroke-width: 1;
}

.dim {
    opacity: 0.5;
}

.caret {
    display: inline-block;
    flex: none;
    width: 3px;
    height: 2px;
    background: #444;
    clip-path: polygon(0 0, 100% 0, 50% 100%);
}

.caret.left {
    height: 3px;
    clip-path: polygon(100% 0, 100% 100%, 0 50%);
}

/* title bar */
.titlebar {
    flex: none;
    display: flex;
    align-items: center;
    height: 13px;
    padding-bottom: 1px;
    background: #cdcbce;
}

.qat {
    display: flex;
    align-items: center;
    gap: 1px;
    width: 264px;
}

.qat svg {
    width: 12px;
    height: 10px;
}

.qat .sep {
    width: 2px;
}

.title {
    flex: 1;
    text-align: center;
    white-space: nowrap;
}

.account {
    display: flex;
    align-items: center;
    gap: 2px;
    width: 142px;
}

.account svg {
    width: 10px;
    height: 10px;
}

.account .caret {
    margin: 0 1px;
}

.account .help {
    margin-left: 6px;
}

.window-buttons {
    display: flex;
    gap: 1px;
}

.window-buttons svg {
    width: 12px;
    height: 10px;
}

/* ribbon */
.ribbon-tabs {
    flex: none;
    display: flex;
    justify-content: space-between;
    height: 11px;
    padding-right: calc(100% - 543px);
    background: #cdcbce;
}

.ribbon-tabs button {
    padding: 0 5px 0 4px;
}

.ribbon-tabs .file {
    width: 23px;
    padding: 0;
    background: #1f7eab;
    color: #fff;
}

.ribbon-tabs .active {
    padding: 0 5px;
    background: #f5f3f6;
}

.ribbon-tabs .more {
    display: flex;
    align-items: center;
    gap: 2px;
    padding-left: 12px;
}

.more svg {
    width: 10px;
    height: 9px;
}

.ribbon {
    flex: none;
    display: flex;
    height: 49px;
    border-bottom: 1px solid #d5d3d6;
}

.group {
    display: flex;
    flex-direction: column;
    justify-content: space-between;
    padding: 2px 0 1px;
    border-right: 1px solid #dddbde;
}

.group.last {
    border-right: 0;
}

.select-group {
    width: 29px;
    padding-left: 3px;
}

.tools {
    display: flex;
}

.tool {
    display: flex;
    flex-direction: column;
    align-items: center;
    position: relative;
    height: 36px;
    padding-top: 2px;
    line-height: 7px;
    white-space: nowrap;
}

.tool svg {
    width: 16px;
    height: 16px;
    margin-bottom: 1px;
}

.tool .caret {
    margin-top: 2px;
}

.tool .caret.side {
    position: absolute;
    right: 0;
    bottom: 8px;
}

.tool.active {
    background: #a9d0ee;
    border: 1px solid #6ea9d6;
    padding-top: 1px;
}

.tool:disabled {
    color: #b5b3b6;
}

.tool:disabled svg {
    opacity: 0.4;
}

.ri {
    fill: #f6f5f7;
    stroke: #67656b;
    stroke-width: 1;
}

.w18 { width: 18px; }
.w20 { width: 20px; }
.w22 { width: 22px; }
.w24 { width: 24px; }
.w26 { width: 26px; }
.w28 { width: 28px; }
.w30 { width: 30px; }
.w46 { width: 46px; }

.group-name {
    text-align: center;
    white-space: nowrap;
}

.select-group .group-name {
    text-align: left;
}

.group-name .caret {
    width: 4px;
    margin-left: 2px;
    vertical-align: middle;
}

.options-bar {
    flex: none;
    height: 13px;
}

/* workspace */
.workspace {
    flex: 1;
    min-height: 0;
    display: grid;
    grid-template-columns: 135px 1fr 183px;
    border-bottom: 1px solid #a9a7aa;
}

.panel-title {
    flex: none;
    display: flex;
    justify-content: space-between;
    align-items: center;
    height: 11px;
    padding: 0 1px;
    white-space: nowrap;
}

.close {
    font-size: 7px;
    font-family: "DejaVu Sans", sans-serif;
    color: #222;
}

.properties {
    display: flex;
    flex-direction: column;
    min-width: 0;
    min-height: 0;
    border-right: 2px solid #d2d0d3;
}

.type-box {
    display: flex;
    align-items: center;
    gap: 3px;
    height: 36px;
    padding: 0 1px 0 2px;
    color: #666;
}

.type-box .caret {
    margin-left: auto;
}

.type-icon {
    display: flex;
    align-items: center;
    justify-content: center;
    width: 32px;
    height: 32px;
    background: #f7f6f8;
    border: 1px solid #e7e5e8;
}

.type-icon svg {
    width: 19px;
    height: 19px;
}

.type-row {
    display: flex;
    gap: 4px;
    height: 12px;
    padding: 0 0 2px 1px;
}

.type-row select {
    appearance: none;
    width: 90px;
    padding-left: 1px;
    border: 1px solid #dcdadd;
    background: #fff linear-gradient(45deg, transparent 45%, #888 45% 55%, transparent 55%) 82px 4px / 3px 3px no-repeat;
}

.edit-type {
    display: flex;
    align-items: center;
    gap: 2px;
}

.edit-type svg {
    width: 8px;
    height: 8px;
}

.grid-wrap {
    flex: 1;
    min-height: 0;
    overflow: hidden;
    background: #fff;
}

.props {
    width: 100%;
    table-layout: fixed;
    border-spacing: 0;
    line-height: 8px;
}

.col-name {
    width: 64px;
}

.col-end {
    width: 6px;
}

.props td,
.props th {
    height: 9px;
    padding: 0;
    border-bottom: 1px dotted #bbb;
    white-space: nowrap;
}

.props td:first-child {
    padding-left: 5px;
}

.props td:nth-child(2) {
    padding-left: 1px;
    border-left: 1px dotted #aaa;
    border-right: 1px dotted #bbb;
}

.props th {
    padding: 0 3px 0 2px;
    text-align: left;
    font-weight: 500;
    background: #e0dee1;
    border-color: #e0dee1;
}

.props th i {
    float: right;
    width: 4px;
    font-style: normal;
    transform: rotate(-90deg);
}

.off {
    color: #aaa;
}

.props input[type="text"] {
    display: block;
    width: 61px;
    height: 8px;
    padding-left: 1px;
    border: 1px solid #333;
}

.props button {
    display: block;
    width: 60px;
    height: 8px;
    border: 1px solid #d5d3d6;
    border-width: 0 1px 1px;
    line-height: 7px;
}

.props input[type="checkbox"] {
    appearance: none;
    display: block;
    width: 7px;
    height: 7px;
    margin: 0;
    border: 1px solid #888;
    border-radius: 1px;
    background: #fff;
}

.props input:disabled {
    border-color: #ddd;
}

.props-footer {
    flex: none;
    display: flex;
    justify-content: space-between;
    align-items: center;
    height: 15px;
    padding: 0 2px 1px;
}

.props-footer a {
    color: #2d75a8;
}

.props-footer button {
    width: 35px;
    height: 10px;
    background: #f8f7f9;
    color: #999;
}

/* document area */
.document {
    display: flex;
    flex-direction: column;
    min-width: 0;
    min-height: 0;
}

.doc-tabs {
    flex: none;
    display: flex;
    height: 11px;
    background: #cdcbce;
}

.doc {
    display: flex;
    align-items: center;
    gap: 3px;
    padding: 0 9px 0 3px;
    color: inherit;
    text-decoration: none;
    white-space: nowrap;
}

.doc svg {
    width: 8px;
    height: 8px;
}

.doc.first {
    width: 78px;
    padding-right: 0;
}

.doc.current {
    width: 64px;
    padding-right: 2px;
    background: #fff;
}

.doc.current .close {
    margin-left: auto;
}

.tab-list {
    display: flex;
    align-items: center;
    margin-left: auto;
    padding-right: 4px;
}

.tab-list .caret {
    width: 5px;
    height: 4px;
}

.view-row {
    flex: 1;
    min-height: 0;
    display: flex;
}

.viewport {
    flex: 1;
    position: relative;
    min-width: 0;
    background: #fff;
    overflow: hidden;
}

.model {
    width: 100%;
    height: 100%;
}

.view-cube {
    position: absolute;
    top: 20px;
    right: 14px;
    width: 65px;
    height: 65px;
}

.view-cube text {
    font-size: 6px;
    fill: #777;
}

.nav-bar {
    position: absolute;
    top: 86px;
    right: 2px;
    display: flex;
    flex-direction: column;
    align-items: center;
    width: 18px;
    height: 59px;
    border: 1px solid #c9c9c9;
    border-radius: 3px;
    background: #eee;
}

.nav-bar svg {
    width: 16px;
}

.nav-bar .caret {
    margin-top: 3px;
    background: #888;
}

.nav-bar hr {
    width: 12px;
    margin: 2px 0 1px;
    border: 0;
    border-top: 1px solid #bbb;
}

.nav-bar .end {
    margin-top: auto;
}

.splitter {
    display: flex;
    align-items: center;
    width: 9px;
    padding-left: 2px;
}

.splitter::before {
    content: "";
    width: 1px;
    height: 9px;
    background: #888;
}

.view-controls {
    flex: none;
    display: flex;
    align-items: center;
    gap: 4px;
    height: 11px;
    padding: 0 16px 1px 7px;
}

.view-controls span {
    width: 28px;
    white-space: nowrap;
}

.view-icons {
    display: flex;
    width: 147px;
}

.view-icons svg {
    flex: 1;
    height: 9px;
    min-width: 0;
}

.grip {
    width: 9px;
    height: 1px;
    margin: 0 auto;
    background: #888;
}

/* project browser */
.browser {
    position: relative;
    display: flex;
    flex-direction: column;
    min-width: 0;
    min-height: 0;
    border-left: 1px solid #c3c1c4;
}

.tree-wrap {
    flex: 1;
    min-height: 0;
    display: flex;
    justify-content: space-between;
    overflow: hidden;
    background: #fff;
}

.tree,
.tree ul {
    margin: 0;
    padding: 0;
    list-style: none;
    background: repeating-linear-gradient(#bbb 0 1px, transparent 1px 2px) 4px 0 / 1px 100% no-repeat;
}

.tree {
    width: 172px;
    margin-top: -1px;
}

.tree ul {
    margin-left: 10px;
}

.tree li {
    white-space: nowrap;
}

.tree li > div {
    display: flex;
    align-items: center;
    height: 9px;
}

.tree ul li::before {
    content: "";
    display: inline-block;
    width: 6px;
    height: 1px;
    margin: 0 2px 0 5px;
    border-top: 1px dotted #aaa;
    vertical-align: middle;
}

.tree ul li:has(> div)::before {
    display: none;
}

.twig {
    width: 5px;
    height: 5px;
    margin: 0 6px 0 2px;
    border: 1px solid #aaa;
    background: linear-gradient(#777, #777) center / 1px 3px no-repeat, linear-gradient(#777, #777) center / 3px 1px no-repeat, #fff;
}

.twig.open {
    background: linear-gradient(#777, #777) center / 3px 1px no-repeat, #fff;
}

.tree svg {
    width: 9px;
    height: 9px;
    margin: 0 2px 0 -3px;
}

.no-twig {
    padding-left: 13px;
}

.selected {
    display: inline-block;
    height: 9px;
    background: #dddbde;
}

.v-thumb {
    width: 1px;
    height: 364px;
    margin: 8px 3px 0 0;
    background: #666;
}

.h-scroll {
    flex: none;
    height: 11px;
    padding: 5px 0 0 8px;
}

.h-scroll i {
    display: block;
    width: 128px;
    height: 1px;
    background: #888;
}

.logo {
    position: absolute;
    left: 31px;
    bottom: 6px;
    width: 138px;
    height: 58px;
}

.swift {
    font: italic bold 20px "DejaVu Sans", sans-serif;
    fill: #1593d6;
}

.wall {
    font: 900 24px Roboto, sans-serif;
    fill: #0b4f86;
}

.letterbox {
    flex: none;
    height: 35px;
    background: #000;
}
```
